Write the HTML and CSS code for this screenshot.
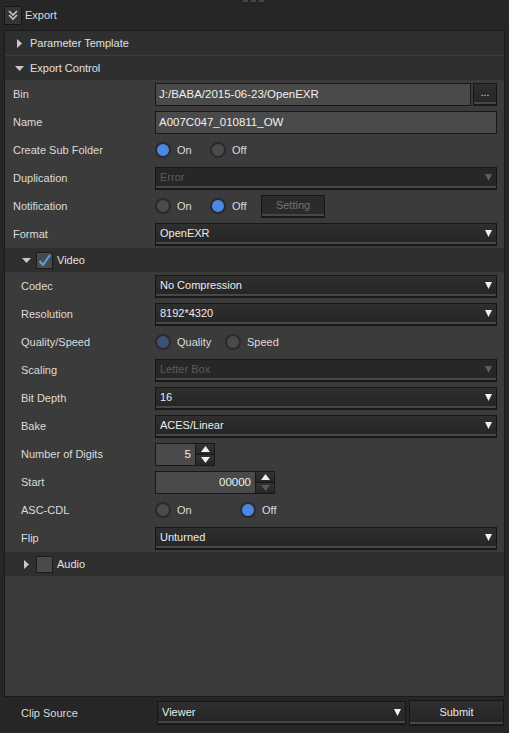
FILE: index.html
```html
<!DOCTYPE html>
<html lang="en">
<head>
    <meta charset="UTF-8">
    <title>Export</title>
    <link rel="stylesheet" href="styles.css">
</head>
<body>
    <div class="topbar">
        <div class="grip"><i></i><i></i><i></i></div>
        <span class="collapse-btn">
            <svg width="12" height="12" viewBox="0 0 12 12"><polyline points="2,2 6,6 10,2" /><polyline points="2,6 6,10 10,6" /></svg>
        </span>
        <span class="title">Export</span>
    </div>

    <div class="panel">
        <div class="group-head">
            <svg class="tri" width="9" height="9" viewBox="0 0 9 9"><polygon points="2,0 7,4.5 2,9" /></svg>
            Parameter Template
        </div>
        <div class="group-head">
            <svg class="tri" width="9" height="9" viewBox="0 0 9 9"><polygon points="0,2 9,2 4.5,7" /></svg>
            Export Control
        </div>

        <div class="form">
            <div class="row">
                <label>Bin</label>
                <div class="ctl">
                    <div class="field grow">J:/BABA/2015-06-23/OpenEXR</div>
                    <div class="btn browse">...</div>
                </div>
            </div>
            <div class="row">
                <label>Name</label>
                <div class="ctl"><div class="field grow">A007C047_010811_OW</div></div>
            </div>
            <div class="row">
                <label>Create Sub Folder</label>
                <div class="ctl">
                    <span class="opt w55"><span class="radio on"></span>On</span>
                    <span class="opt"><span class="radio"></span>Off</span>
                </div>
            </div>
            <div class="row">
                <label>Duplication</label>
                <div class="ctl">
                    <div class="select disabled">Error<svg class="arrow" width="7" height="7" viewBox="0 0 7 7"><polygon points="0,0 7,0 3.5,7" /></svg></div>
                </div>
            </div>
            <div class="row">
                <label>Notification</label>
                <div class="ctl">
                    <span class="opt w55"><span class="radio"></span>On</span>
                    <span class="opt w51"><span class="radio on"></span>Off</span>
                    <div class="btn setting">Setting</div>
                </div>
            </div>
            <div class="row">
                <label>Format</label>
                <div class="ctl">
                    <div class="select">OpenEXR<svg class="arrow" width="7" height="7" viewBox="0 0 7 7"><polygon points="0,0 7,0 3.5,7" /></svg></div>
                </div>
            </div>

            <div class="sub-head">
                <svg class="tri" width="9" height="9" viewBox="0 0 9 9"><polygon points="0,2 9,2 4.5,7" /></svg>
                <span class="check checked">
                    <svg width="15" height="15" viewBox="0 0 15 15"><polyline points="2.5,8 6,12 13,2" /></svg>
                </span>
                Video
            </div>

            <div class="sub">
                <div class="row">
                    <label>Codec</label>
                    <div class="ctl"><div class="select">No Compression<svg class="arrow" width="7" height="7" viewBox="0 0 7 7"><polygon points="0,0 7,0 3.5,7" /></svg></div></div>
                </div>
                <div class="row">
                    <label>Resolution</label>
                    <div class="ctl"><div class="select">8192*4320<svg class="arrow" width="7" height="7" viewBox="0 0 7 7"><polygon points="0,0 7,0 3.5,7" /></svg></div></div>
                </div>
                <div class="row">
                    <label>Quality/Speed</label>
                    <div class="ctl">
                        <span class="opt w70"><span class="radio on dim"></span>Quality</span>
                        <span class="opt"><span class="radio"></span>Speed</span>
                    </div>
                </div>
                <div class="row">
                    <label>Scaling</label>
                    <div class="ctl"><div class="select disabled">Letter Box<svg class="arrow" width="7" height="7" viewBox="0 0 7 7"><polygon points="0,0 7,0 3.5,7" /></svg></div></div>
                </div>
                <div class="row">
                    <label>Bit Depth</label>
                    <div class="ctl"><div class="select">16<svg class="arrow" width="7" height="7" viewBox="0 0 7 7"><polygon points="0,0 7,0 3.5,7" /></svg></div></div>
                </div>
                <div class="row">
                    <label>Bake</label>
                    <div class="ctl"><div class="select">ACES/Linear<svg class="arrow" width="7" height="7" viewBox="0 0 7 7"><polygon points="0,0 7,0 3.5,7" /></svg></div></div>
                </div>
                <div class="row">
                    <label>Number of Digits</label>
                    <div class="ctl">
                        <div class="spin">
                            <div class="field num short">5</div>
                            <div class="spin-btns">
                                <span><svg width="9" height="6" viewBox="0 0 9 6"><polygon points="4.5,0 9,6 0,6" /></svg></span>
                                <span><svg width="9" height="6" viewBox="0 0 9 6"><polygon points="0,0 9,0 4.5,6" /></svg></span>
                            </div>
                        </div>
                    </div>
                </div>
                <div class="row">
                    <label>Start</label>
                    <div class="ctl">
                        <div class="spin">
                            <div class="field num long">00000</div>
                            <div class="spin-btns">
                                <span><svg width="9" height="6" viewBox="0 0 9 6"><polygon points="4.5,0 9,6 0,6" /></svg></span>
                                <span class="off"><svg width="9" height="6" viewBox="0 0 9 6"><polygon points="0,0 9,0 4.5,6" /></svg></span>
                            </div>
                        </div>
                    </div>
                </div>
                <div class="row">
                    <label>ASC-CDL</label>
                    <div class="ctl">
                        <span class="opt w85"><span class="radio"></span>On</span>
                        <span class="opt"><span class="radio on"></span>Off</span>
                    </div>
                </div>
                <div class="row">
                    <label>Flip</label>
                    <div class="ctl"><div class="select">Unturned<svg class="arrow" width="7" height="7" viewBox="0 0 7 7"><polygon points="0,0 7,0 3.5,7" /></svg></div></div>
                </div>
            </div>

            <div class="sub-head">
                <svg class="tri" width="9" height="9" viewBox="0 0 9 9"><polygon points="2,0 7,4.5 2,9" /></svg>
                <span class="check"></span>
                Audio
            </div>
        </div>
    </div>

    <div class="bottombar">
        <label>Clip Source</label>
        <div class="select source">Viewer<svg class="arrow" width="7" height="7" viewBox="0 0 7 7"><polygon points="0,0 7,0 3.5,7" /></svg></div>
        <div class="btn submit">Submit</div>
    </div>
</body>
</html>
```

FILE: styles.css
```css
body {
    margin: 0;
    background: #262626;
    color: #dcdcdc;
    font-family: "Liberation Sans", Arial, sans-serif;
    font-size: 11px;
    line-height: 14px;
    width: 509px;
    height: 733px;
    overflow: hidden;
    position: relative;
}

/* top title bar */
.topbar {
    height: 30px;
    display: flex;
    align-items: center;
    padding-left: 4px;
    box-sizing: border-box;
}

.grip {
    position: absolute;
    top: 0;
    left: 243px;
    display: flex;
    gap: 3px;
}

.grip i {
    width: 5px;
    height: 2px;
    background: #464646;
}

.collapse-btn {
    width: 16px;
    height: 17px;
    border: 1px solid #161616;
    background: #343434;
    display: flex;
    align-items: center;
    justify-content: center;
    margin-right: 3px;
}

.collapse-btn polyline {
    fill: none;
    stroke: #c4c4c4;
    stroke-width: 1.6;
}

/* main panel */
.panel {
    margin-left: 4px;
    width: 501px;
    height: 667px;
    box-sizing: border-box;
    border: 1px solid #1a1a1a;
    background: #3b3b3b;
    display: flex;
    flex-direction: column;
}

.group-head {
    height: 24px;
    background: #2f2f2f;
    display: flex;
    align-items: center;
    padding-left: 10px;
    color: #e0e0e0;
}

.group-head + .group-head {
    border-top: 1px solid #3d3d3d;
}

.tri {
    margin-right: 6px;
}

.tri polygon {
    fill: #c8c8c8;
}

.row {
    display: grid;
    grid-template-columns: 150px 1fr;
    align-items: center;
    height: 28px;
    padding-right: 7px;
}

.row label {
    padding-left: 8px;
}

.sub .row label {
    padding-left: 16px;
}

.ctl {
    display: flex;
    align-items: center;
    height: 23px;
}

/* inputs */
.field {
    height: 23px;
    box-sizing: border-box;
    border: 1px solid #181818;
    background: #4a4a4a;
    color: #f0f0f0;
    padding: 0 3px;
    display: flex;
    align-items: center;
    font-size: 11.5px;
}

.grow {
    flex: 1;
}

.num {
    justify-content: flex-end;
    padding-right: 4px;
}

.short {
    width: 41px;
}

.long {
    width: 101px;
}

.btn {
    height: 23px;
    box-sizing: border-box;
    border: 1px solid #161616;
    background: linear-gradient(#2f2f2f, #242424);
    box-shadow: inset 0 -1px 0 #1c1c1c, inset 0 -3px 0 #474747;
    color: #e6e6e6;
    display: flex;
    align-items: center;
    justify-content: center;
    padding-bottom: 2px;
}

.browse {
    width: 24px;
    margin-left: 2px;
    font-size: 10px;
}

.setting {
    width: 64px;
    color: #727272;
    background: #2a2a2a;
}

.select {
    flex: 1;
    height: 23px;
    box-sizing: border-box;
    border: 1px solid #161616;
    background: linear-gradient(#2f2f2f, #242424);
    box-shadow: inset 0 -1px 0 #1c1c1c, inset 0 -3px 0 #474747;
    color: #ececec;
    display: flex;
    align-items: center;
    justify-content: space-between;
    padding: 0 4px 2px 4px;
}

.select .arrow polygon {
    fill: #f2f2f2;
}

.select.disabled {
    background: #272727;
    color: #5c5c5c;
}

.select.disabled .arrow polygon {
    fill: #5e5e5e;
}

/* radios */
.opt {
    display: flex;
    align-items: center;
    gap: 6px;
    color: #dcdcdc;
}

.w55 { width: 55px; }
.w51 { width: 51px; }
.w70 { width: 70px; }
.w85 { width: 85px; }

.radio {
    width: 16px;
    height: 16px;
    box-sizing: border-box;
    border-radius: 50%;
    background: #4a4a4a;
    border: 2px solid #2a2a2a;
}

.radio.on {
    background: #4a88e4;
}

.radio.on.dim {
    background: #3c5175;
}

/* spinner */
.spin {
    display: flex;
    height: 23px;
}

.spin-btns {
    width: 19px;
    display: flex;
    flex-direction: column;
    border: 1px solid #181818;
    border-left: none;
    box-sizing: border-box;
}

.spin-btns span {
    flex: 1;
    display: flex;
    align-items: center;
    justify-content: center;
    background: linear-gradient(#343434, #262626);
}

.spin-btns span + span {
    border-top: 1px solid #181818;
}

.spin-btns polygon {
    fill: #f0f0f0;
}

.spin-btns .off polygon {
    fill: #5a5a5a;
}

/* sub sections */
.sub-head {
    height: 24px;
    background: #2f2f2f;
    display: flex;
    align-items: center;
    padding-left: 17px;
    color: #e0e0e0;
}

.sub-head .tri {
    margin-right: 5px;
}

.check {
    width: 17px;
    height: 17px;
    box-sizing: border-box;
    border: 1px solid #1a1a1a;
    background: #4a4a4a;
    margin-right: 4px;
    display: flex;
    align-items: center;
    justify-content: center;
}

.check polyline {
    fill: none;
    stroke: #5aa2f2;
    stroke-width: 2;
}

/* bottom */
.bottombar {
    display: grid;
    grid-template-columns: 133px 249px 95px;
    column-gap: 3px;
    align-items: center;
    height: 28px;
    padding-left: 21px;
    margin-top: 2px;
}

.bottombar label {
    color: #dcdcdc;
}

.source {
    height: 24px;
}

.submit {
    height: 26px;
}
```
